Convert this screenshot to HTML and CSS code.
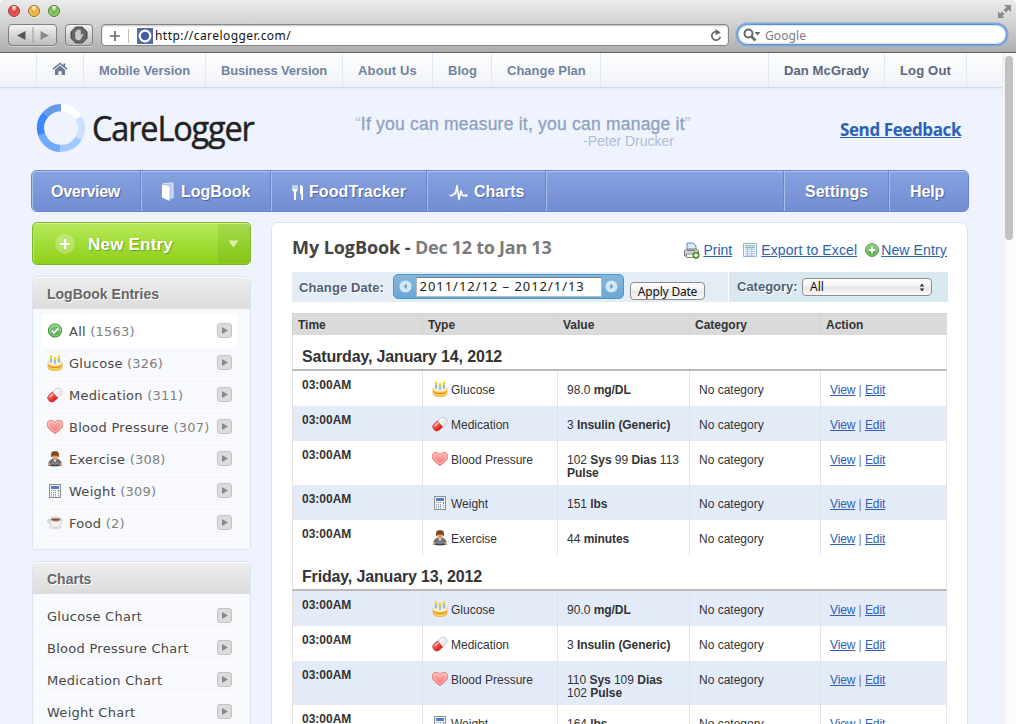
FILE: index.html
```html
<!DOCTYPE html>
<html lang="en">
<head>
<meta charset="utf-8">
<title>CareLogger</title>
<link rel="stylesheet" href="styles.css">
</head>
<body>
<svg class="sprite" aria-hidden="true">
  <defs>
    <linearGradient id="gRed" x1="0" y1="0" x2="0" y2="1"><stop offset="0" stop-color="#ff7a75"/><stop offset="1" stop-color="#dc1514"/></linearGradient>
    <linearGradient id="gHeart" x1="0" y1="0" x2="0" y2="1"><stop offset="0" stop-color="#ffb9b5"/><stop offset="1" stop-color="#f4706f"/></linearGradient>
    <linearGradient id="gGreen" x1="0" y1="0" x2="0" y2="1"><stop offset="0" stop-color="#8fd486"/><stop offset="1" stop-color="#3f9c34"/></linearGradient>
    <symbol id="check" viewBox="0 0 16 16"><circle cx="8" cy="7.500" r="6.600" fill="url(#gGreen)" stroke="#2f8a2c"/><circle cx="8" cy="7.500" r="5.500" fill="none" stroke="#b6e5ae" stroke-width=".8"/><path d="M4.800 7.700l2.300 2.200 4.200-4.500" fill="none" stroke="#fff" stroke-width="2"/></symbol>
    <symbol id="cake" viewBox="0 0 16 16">
      <path d="M1 7.500v5C1 14.500 4 15.600 8 15.600s7-1.100 7-3.100v-5z" fill="#fbd04a" stroke="#e3a52c" stroke-width=".6"/>
      <path d="M1.300 10.300c1.500 1.900 4 2.200 6.700 2.200s5.200-.3 6.700-2.200" fill="none" stroke="#e9703a" stroke-width="1"/>
      <ellipse cx="8" cy="7.700" rx="7" ry="3" fill="#fff6d2" stroke="#f0cf7d" stroke-width=".6"/>
      <path d="M4 3.500v4M8 5v3.800M12 3.500v4" stroke="#7da5dd" stroke-width="2.200"/>
      <path d="M4 3.500v4M8 5v3.800M12 3.500v4" stroke="#b4d1f4" stroke-width=".9"/>
      <ellipse cx="4" cy="2" rx="1.300" ry="1.800" fill="#f2d71c"/><ellipse cx="8" cy="3.600" rx="1.300" ry="1.800" fill="#f2d71c"/><ellipse cx="12" cy="2" rx="1.300" ry="1.800" fill="#f2d71c"/>
    </symbol>
    <symbol id="pill" viewBox="0 0 16 16"><g transform="rotate(-42 8 8)">
      <rect x="-.3" y="4" width="16.600" height="8" rx="4" fill="#ececec" stroke="#c0bdbd" stroke-width=".6"/>
      <path d="M8 4H3.700a4 4 0 0 0 0 8H8z" fill="url(#gRed)" stroke="#cf2a28" stroke-width=".6"/>
      <path d="M3.500 6h3.500" stroke="#ffc9c6" stroke-width="1.400" stroke-linecap="round"/><path d="M9.500 6.200h3.500" stroke="#fff" stroke-width="1.800" stroke-linecap="round"/></g>
    </symbol>
    <symbol id="heart" viewBox="0 0 16 16"><path d="M8 14.500C4.500 12 .1 9 .1 5.300.1 2.600 2.100 1.300 4.200 1.300c1.700 0 3.100.8 3.800 2.100.7-1.300 2.100-2.100 3.800-2.100 2.100 0 4.100 1.300 4.100 4C15.900 9 11.500 12 8 14.500z" fill="url(#gHeart)" stroke="#dc6461" stroke-width=".8"/><path d="M8 13C5.200 10.900 1.400 8.300 1.400 5.400c0-2 1.400-2.900 2.800-2.900 1.800 0 3.100 1.100 3.800 2.800.7-1.700 2-2.800 3.800-2.800 1.400 0 2.800.9 2.800 2.900C14.600 8.300 10.800 10.900 8 13z" fill="none" stroke="#ffd3cf" stroke-width=".8"/></symbol>
    <symbol id="person" viewBox="0 0 16 16">
      <path d="M1.500 14.500c0-3 1.200-5.700 4-6.200h5c2.800.5 4 3.200 4 6.200z" fill="#6b7076" stroke="#44474c" stroke-width=".7"/>
      <path d="M6.500 8.500L8 11.500l1.500-3z" fill="#f4f4f4"/><path d="M4.500 11.500l3 1.800M11.500 11.500l-3 1.800" stroke="#9fa3a9"/>
      <rect x=".9" y="12" width="2.300" height="2.600" rx="1" fill="#eba765"/><rect x="12.800" y="12" width="2.300" height="2.600" rx="1" fill="#eba765"/>
      <path d="M5.200 4h5.600v2.500C10.800 8.200 9.700 9 8 9S5.200 8.200 5.200 6.500z" fill="#e5a069"/>
      <path d="M4.400 6V3C4.400 1.200 5.600.6 8 .6s3.600.6 3.600 2.400v3l-.9-1.600L8 4.200l-2.700.2z" fill="#84491f" stroke="#5e300f" stroke-width=".5"/>
      <path d="M4 14.600h8" stroke="#3f4247" stroke-width="1.400"/>
    </symbol>
    <symbol id="calc" viewBox="0 0 16 16"><rect x="2.500" y="1.500" width="11" height="13" fill="#f6f6f6" stroke="#8c8f94"/><rect x="4" y="3" width="8" height="3" fill="#4f7dc5"/><path d="M4 7.500h6M4 9.500h6M4 11.500h6M4 13h6" stroke="#8594ad" stroke-width="1" stroke-dasharray="1 1"/><path d="M11 8.500h1M11 10.500h1M11 12.500h1" stroke="#8594ad"/><path d="M11 7.500h1.200" stroke="#e05338" stroke-width="1.200"/></symbol>
    <symbol id="cup" viewBox="0 0 16 16"><ellipse cx="8.500" cy="12" rx="6" ry="1.900" fill="#ededed" stroke="#c4c4c4" stroke-width=".6"/><path d="M3.200 4.500C.2 4-.3 8.300 3.800 9" fill="none" stroke="#b0b0b0" stroke-width="1"/><path d="M2.500 4.500c0 5 2 8 5.800 8s6.700-3 6.700-8z" fill="#f3f3f3" stroke="#bcbcbc" stroke-width=".6"/><ellipse cx="8.700" cy="4.400" rx="6.300" ry="2.300" fill="#fcfcfc" stroke="#b0b0b0" stroke-width=".6"/><ellipse cx="8.700" cy="4.600" rx="4.800" ry="1.400" fill="#8d5238"/></symbol>
    <symbol id="go" viewBox="0 0 15 15"><rect x=".5" y=".5" width="14" height="14" rx="2.500" fill="#dcdcdc" stroke="#c3c3c3"/><path d="M5 4l6 3.500L5 11z" fill="#8b8b8b"/></symbol>
  </defs>
</svg>

<div class="chrome">
  <div class="titlebar">
    <span class="light red"></span><span class="light amber"></span><span class="light lime"></span>
    <svg class="expand" width="15" height="15" viewBox="0 0 15 15"><path d="M7 1h7v7l-2.300-2.300-2.700 2.700-2.400-2.400 2.700-2.700zM1 7.500l2.100 2.100 2-2 2.300 2.300-2 2L7.500 14H1z" fill="#8a8a8a"/></svg>
  </div>
  <div class="toolbar">
    <div class="tool history">
      <svg width="48" height="20" viewBox="0 0 48 20"><path d="M16.500 6v9L8 10.500z" fill="#555"/><path d="M31.500 6v9l8.500-4.500z" fill="#8b8b8b"/><path d="M24 2v16" stroke="#9b9b9b"/></svg>
    </div>
    <div class="tool stop">
      <svg width="18" height="18" viewBox="0 0 18 18"><path d="M5.700 1h6.600L17 5.700v6.600L12.300 17H5.700L1 12.300V5.700z" fill="#666" stroke="#444"/><path d="M5.200 9.500V6.200c0-.9 1.300-.9 1.300 0V4.500c0-1 1.400-1 1.400 0v-.6c0-1 1.500-1 1.500 0v.6c0-1 1.400-1 1.400 0v4.700l1.300-1.300c.8-.6 1.700.1 1.200.9l-2.400 4.200c-.5.900-1.200 1.300-2.200 1.300-2.200 0-3.500-1.300-3.500-3.300z" fill="#c9c9c9"/></svg>
    </div>
    <div class="address">
      <svg width="12" height="12" viewBox="0 0 12 12"><path d="M6 1v10M1 6h10" stroke="#6b6b6b" stroke-width="1.700"/></svg>
      <span class="split"></span>
      <svg class="favicon" width="16" height="16" viewBox="0 0 16 16"><path d="M0 0h16v16H0z" fill="#5469ab"/><circle cx="8" cy="8" r="5.300" fill="#465ca2" stroke="#fff" stroke-width="2.200"/></svg>
      <span class="url">http://carelogger.com/</span>
      <svg class="reload" width="12" height="13" viewBox="0 0 12 13"><path d="M9.600 4.300A4.300 4.300 0 1 0 10.300 8" fill="none" stroke="#6b6b6b" stroke-width="1.700"/><path d="M5.500 0l5 3.200-5 3z" fill="#6b6b6b"/></svg>
    </div>
    <div class="search">
      <svg width="18" height="14" viewBox="0 0 18 14"><circle cx="5.500" cy="5.500" r="4" fill="none" stroke="#666" stroke-width="2"/><path d="M8.500 8.500l4 4" stroke="#666" stroke-width="2.500"/><path d="M11.500 4h6L14.500 7.500z" fill="#666"/></svg>
      <span>Google</span>
    </div>
  </div>
</div>

<div class="viewport">
  <div class="page">
    <div class="topnav">
      <span class="gutter"></span>
      <a class="home"><svg width="16" height="14" viewBox="0 0 16 14"><path d="M11.300 1.500h2v3h-2z" fill="#6d7b93"/><path d="M1 7.200L8 1.500l7 5.700" fill="none" stroke="#6d7b93" stroke-width="1.600"/><path d="M3 7.700l5-4.100 5 4.100V13H9.600V9.200H6.400V13H3z" fill="#6d7b93"/></svg></a>
      <a class="tn-mobile">Mobile Version</a>
      <a class="tn-business">Business Version</a>
      <a class="tn-about">About Us</a>
      <a class="tn-blog">Blog</a>
      <a class="tn-plan">Change Plan</a>
      <span class="fill"></span>
      <a class="user tn-user">Dan McGrady</a>
      <a class="user tn-out">Log Out</a>
      <span class="tail"></span>
    </div>

    <header class="masthead">
      <svg class="ring" width="50" height="50" viewBox="0 0 50 50">
        <g fill="none" stroke-width="7.200">
          <path d="M25 4.600A20.400 20.400 0 0 1 42.700 14.800" stroke="#fff"/>
          <path d="M42.700 14.800A20.400 20.400 0 0 1 42.700 35.200" stroke="#cbe1ff"/>
          <path d="M42.700 35.200A20.400 20.400 0 0 1 24 45.400" stroke="#a3caff"/>
          <path d="M24 45.400A20.400 20.400 0 0 1 5.600 31.500" stroke="#6faaff"/>
          <path d="M5.600 31.500A20.400 20.400 0 0 1 9.500 11.700" stroke="#3b89fd"/>
          <path d="M9.500 11.700A20.400 20.400 0 0 1 25 4.600" stroke="#639bea"/>
        </g>
      </svg>
      <span class="brand">CareLogger</span>
      <div class="quote">
        <p class="saying"><i>“</i>If you can measure it, you can manage it<i>”</i></p>
        <p class="author">-Peter Drucker</p>
      </div>
      <a class="feedback">Send Feedback</a>
    </header>

    <nav class="mainnav">
      <a class="mn-overview">Overview</a>
      <a class="mn-logbook"><svg width="14" height="20" viewBox="0 0 14 20"><path d="M3 1.500l9-1 1 1V16l-4 1.500z" fill="#b7c7ee"/><path d="M1 2.500l7.500 2V19L1 15.500z" fill="#fff"/><path d="M2 1.700L11 1v14.500" fill="none" stroke="#dbe4fb"/></svg>LogBook</a>
      <a class="mn-food"><svg width="12" height="17" viewBox="0 0 12 17"><path d="M1 1v4.500M3 1v4.500M5 1v4.500" stroke="#fff" stroke-width="1.100"/><path d="M.5 5h5v1.500L4 8v8H2V8L.5 6.500z" fill="#fff"/><path d="M8 1c2 0 3 1 3 3v12H9.200V10H8z" fill="#fff"/></svg>FoodTracker</a>
      <a class="mn-charts"><svg width="19" height="17" viewBox="0 0 19 17"><path d="M.5 11.500h3L5.500 9l1 .8L8 1.500l2 14 2-8.500 1.500 4.500H18" fill="none" stroke="#fff" stroke-width="1.600" stroke-linejoin="round"/><circle cx="17" cy="11.500" r="1.500" fill="#fff"/></svg>Charts</a>
      <span class="fill"></span>
      <a class="mn-settings">Settings</a>
      <a class="mn-help">Help</a>
    </nav>

    <div class="columns">
      <aside class="sidebar">
        <div class="newentry">
          <svg width="20" height="20" viewBox="0 0 20 20"><circle cx="10" cy="10" r="10" fill="#fff" opacity=".25"/><path d="M10 5v10M5 10h10" stroke="#fff" stroke-width="2.200"/></svg>
          <span class="label">New Entry</span>
          <span class="drop"><svg width="11" height="8" viewBox="0 0 11 8"><path d="M.5.5h10l-5 7z" fill="#d8f1b2"/></svg></span>
        </div>

        <section class="box">
          <h3>LogBook Entries</h3>
          <ul>
            <li class="on"><svg class="ic"><use href="#check"/></svg><span>All <em>(1563)</em></span><svg class="go"><use href="#go"/></svg></li>
            <li><svg class="ic"><use href="#cake"/></svg><span>Glucose <em>(326)</em></span><svg class="go"><use href="#go"/></svg></li>
            <li><svg class="ic"><use href="#pill"/></svg><span>Medication <em>(311)</em></span><svg class="go"><use href="#go"/></svg></li>
            <li><svg class="ic"><use href="#heart"/></svg><span>Blood Pressure <em>(307)</em></span><svg class="go"><use href="#go"/></svg></li>
            <li><svg class="ic"><use href="#person"/></svg><span>Exercise <em>(308)</em></span><svg class="go"><use href="#go"/></svg></li>
            <li><svg class="ic"><use href="#calc"/></svg><span>Weight <em>(309)</em></span><svg class="go"><use href="#go"/></svg></li>
            <li><svg class="ic"><use href="#cup"/></svg><span>Food <em>(2)</em></span><svg class="go"><use href="#go"/></svg></li>
          </ul>
        </section>

        <section class="box">
          <h3>Charts</h3>
          <ul>
            <li><span>Glucose Chart</span><svg class="go"><use href="#go"/></svg></li>
            <li><span>Blood Pressure Chart</span><svg class="go"><use href="#go"/></svg></li>
            <li><span>Medication Chart</span><svg class="go"><use href="#go"/></svg></li>
            <li><span>Weight Chart</span><svg class="go"><use href="#go"/></svg></li>
          </ul>
        </section>
      </aside>

      <main class="panel">
        <div class="heading">
          <h1>My LogBook - <em>Dec 12 to Jan 13</em></h1>
          <div class="actions">
            <svg width="17" height="17" viewBox="0 0 17 17"><path d="M4 8V1h6l3 3v4z" fill="#dcecff" stroke="#5c90cc"/><path d="M1.500 14V8.500l2-1.500h10l2 1.500V14z" fill="#d4d4d4" stroke="#7c7c7c"/><path d="M4 8.500h8" stroke="#777" stroke-width="1.200"/><path d="M3.500 12h9v3.500h-9z" fill="#f6f6f6" stroke="#888"/><circle cx="13" cy="13.300" r="3.200" fill="#66a83a" stroke="#3a7a1d" stroke-width=".8"/><path d="M13 11.300v4M11 13.300h4" stroke="#fff" stroke-width="1.200"/></svg>
            <a class="ac-print">Print</a>
            <svg width="14" height="14" viewBox="0 0 14 14"><path d="M.5.500h13v13H.500z" fill="#fafcff" stroke="#8fb3dd"/><path d="M2 2.500h10" stroke="#8cc56d"/><path d="M2 4.500h10" stroke="#7fa8d8" stroke-width="1.500"/><path d="M2 6.500h10M2 8.500h10M2 10.500h10M2 12.200h10M4.500 4v8.500M8.500 4v8.500" stroke="#a9c5e6" stroke-width=".9"/></svg>
            <a class="ac-export">Export to Excel</a>
            <svg width="14" height="14" viewBox="0 0 14 14"><circle cx="7" cy="7" r="6.400" fill="url(#gGreen)" stroke="#4a9a40"/><circle cx="7" cy="7" r="5.300" fill="none" stroke="#b3e0a9" stroke-width=".7"/><path d="M7 3.700v6.600M3.700 7h6.600" stroke="#fff" stroke-width="2"/></svg>
            <a class="ac-new">New Entry</a>
          </div>
        </div>

        <div class="filters">
          <div class="bydate">
            <label>Change Date:</label>
            <div class="range">
              <svg width="13" height="13" viewBox="0 0 13 13"><circle cx="6.500" cy="6.500" r="6" fill="#d3e7f5"/><path d="M7.800 3.700v5.600L4.600 6.500z" fill="#5da0d0"/></svg>
              <span class="field">2011/12/12 – 2012/1/13</span>
              <svg width="13" height="13" viewBox="0 0 13 13"><circle cx="6.500" cy="6.500" r="6" fill="#d3e7f5"/><path d="M5.200 3.700v5.600l3.200-2.800z" fill="#5da0d0"/></svg>
            </div>
            <span class="apply">Apply Date</span>
          </div>
          <div class="bycat">
            <label>Category:</label>
            <span class="select">All<svg width="6" height="9" viewBox="0 0 6 9"><path d="M3 .5L5.300 3.500H.7zM3 8.500L.7 5.500h4.600z" fill="#333"/></svg></span>
          </div>
        </div>

        <table class="log">
          <colgroup><col class="c1"><col class="c2"><col class="c3"><col class="c4"><col class="c5"></colgroup>
          <thead><tr><th>Time</th><th>Type</th><th>Value</th><th>Category</th><th>Action</th></tr></thead>
          <tbody>
            <tr class="day"><td colspan="5">Saturday, January 14, 2012</td></tr>
            <tr><td>03:00AM</td><td><svg class="ic"><use href="#cake"/></svg>Glucose</td><td>98.0 <b>mg/DL</b></td><td>No category</td><td><a>View</a> | <a>Edit</a></td></tr>
            <tr class="alt"><td>03:00AM</td><td><svg class="ic"><use href="#pill"/></svg>Medication</td><td>3 <b>Insulin (Generic)</b></td><td>No category</td><td><a>View</a> | <a>Edit</a></td></tr>
            <tr class="tall"><td>03:00AM</td><td><svg class="ic"><use href="#heart"/></svg>Blood Pressure</td><td>102 <b>Sys</b> 99 <b>Dias</b> 113 <b>Pulse</b></td><td>No category</td><td><a>View</a> | <a>Edit</a></td></tr>
            <tr class="alt"><td>03:00AM</td><td><svg class="ic"><use href="#calc"/></svg>Weight</td><td>151 <b>lbs</b></td><td>No category</td><td><a>View</a> | <a>Edit</a></td></tr>
            <tr><td>03:00AM</td><td><svg class="ic"><use href="#person"/></svg>Exercise</td><td>44 <b>minutes</b></td><td>No category</td><td><a>View</a> | <a>Edit</a></td></tr>
            <tr class="day"><td colspan="5">Friday, January 13, 2012</td></tr>
            <tr class="alt"><td>03:00AM</td><td><svg class="ic"><use href="#cake"/></svg>Glucose</td><td>90.0 <b>mg/DL</b></td><td>No category</td><td><a>View</a> | <a>Edit</a></td></tr>
            <tr><td>03:00AM</td><td><svg class="ic"><use href="#pill"/></svg>Medication</td><td>3 <b>Insulin (Generic)</b></td><td>No category</td><td><a>View</a> | <a>Edit</a></td></tr>
            <tr class="alt tall"><td>03:00AM</td><td><svg class="ic"><use href="#heart"/></svg>Blood Pressure</td><td>110 <b>Sys</b> 109 <b>Dias</b> 102 <b>Pulse</b></td><td>No category</td><td><a>View</a> | <a>Edit</a></td></tr>
            <tr><td>03:00AM</td><td><svg class="ic"><use href="#calc"/></svg>Weight</td><td>164 <b>lbs</b></td><td>No category</td><td><a>View</a> | <a>Edit</a></td></tr>
          </tbody>
        </table>
      </main>
    </div>
  </div>
  <div class="scrollbar"><span class="thumb"></span></div>
</div>
</body>
</html>
```
FILE: styles.css
```css
* { box-sizing: border-box; }
body {
  margin: 0; width: 1016px; height: 724px; overflow: hidden;
  display: flex; flex-direction: column;
  font-family: "Liberation Sans", Arial, sans-serif; color: #333;
}
h1, h3, p, ul { margin: 0; padding: 0; }
ul { list-style: none; }
em, i { font-style: normal; }
svg { display: block; flex: none; }
.sprite { position: absolute; width: 0; height: 0; }
.fill { flex: 1; }

/* browser window */
.chrome {
  height: 53px; flex: none; border-bottom: 1px solid #606060;
  background: linear-gradient(#ebebeb, #cfcfcf 50%, #adadad);
  border-radius: 4px 4px 0 0;
}
.titlebar { height: 24px; display: flex; padding: 5px 4px 0 8px; }
.light { width: 12px; height: 12px; margin-right: 8px; border-radius: 50%; border: 1px solid; box-shadow: 0 1px 0 rgba(255,255,255,.5); }
.red { background: radial-gradient(ellipse at 50% 0, #fff 8%, #e23e3c 45%, #f47c78); border-color: #8d3a38; }
.amber { background: radial-gradient(ellipse at 50% 0, #fff 8%, #eba82c 45%, #fbe08a); border-color: #956a26; }
.lime { background: radial-gradient(ellipse at 50% 0, #fff 8%, #6cb548 45%, #bdea9a); border-color: #4d7c36; }
.expand { margin: -1px 0 0 auto; }
.toolbar { height: 22px; display: flex; padding-left: 8px; }
.tool {
  height: 22px; border: 1px solid #808080; border-radius: 4px;
  background: linear-gradient(#f3f3f3, #bcbcbc); box-shadow: 0 1px 0 rgba(255,255,255,.4);
  display: flex; align-items: center; justify-content: center;
}
.history { width: 49px; }
.stop { width: 28px; margin-left: 8px; }
.address {
  width: 628px; height: 22px; margin-left: 8px; padding: 1px 6px 0 7px;
  display: flex; align-items: center; background: #fff;
  border: 1px solid #858585; border-radius: 4px; box-shadow: inset 0 1px 2px rgba(0,0,0,.25);
}
.split { width: 1px; height: 14px; margin-left: 7px; background: #bdbdbd; }
.favicon { margin-left: 8px; }
.url { margin-left: 2px; font: 12px/20px "Noto Sans", sans-serif; letter-spacing: .44px; color: #111; }
.reload { margin-left: auto; }
.search {
  width: 270px; height: 21px; margin-left: 8px; padding: 1px 0 0 5px;
  display: flex; align-items: center; gap: 4px; border-radius: 11px;
  background: #fff; border: 1px solid #5a8fcf; box-shadow: 0 0 0 1.500px #82abdc, inset 0 0 2px #7fa9dc;
  font: 12px/19px "Noto Sans", sans-serif; letter-spacing: .08px; color: #7b7b7b;
}
.viewport { flex: 1; min-height: 0; display: flex; }
.page { width: 1002px; background: #eff3fd; overflow: hidden; }
.scrollbar { width: 14px; background: linear-gradient(90deg, #ededed, #fafafa 30%, #fbfbfb); padding: 3px 0 0 3px; }
.thumb { display: block; width: 8px; height: 184px; border-radius: 4px; background: #c1c1c1; }

/* account bar */
.topnav {
  height: 35px; display: flex; border-bottom: 1px solid #ccdaee;
  background: linear-gradient(#fff, #f0f2f8);
  font-size: 13px; font-weight: bold; line-height: 36px; color: #7083a0;
}
.topnav a, .tail { border-left: 1px solid #e1e8f5; padding-left: 15px; }
.topnav .user { color: #58667d; }
.gutter { width: 36px; }
.topnav .home { width: 47px; padding: 9px 0 0 15px; }
.tn-mobile { width: 122px; letter-spacing: -.05px; }
.tn-business { width: 137px; letter-spacing: -.15px; }
.tn-about { width: 90px; letter-spacing: .15px; }
.tn-blog { width: 59px; }
.tn-plan { width: 110px; border-right: 1px solid #e1e8f5; }
.tn-user { width: 116px; letter-spacing: .11px; }
.tn-out { width: 82px; letter-spacing: .17px; }
.tail { width: 36px; }

/* logo and quote */
.masthead { height: 82px; display: flex; padding-left: 36px; box-shadow: inset 0 2px 0 #e7edf8; }
.ring { margin-top: 15px; }
.brand {
  width: 184px; margin-left: 6px; padding-top: 19px;
  font: 34.500px/42px "Open Sans", "Noto Sans", sans-serif; color: #222;
  letter-spacing: -1.200px; transform: scaleX(.94); transform-origin: 0 0;
  -webkit-text-stroke: .5px #222;
}
.quote { width: 337px; margin-left: 79px; padding-top: 26px; }
.saying { font-size: 17.500px; line-height: 20px; letter-spacing: .22px; color: #8ea1c0; white-space: nowrap; -webkit-text-stroke: .3px #8ea1c0; }
.saying i { color: #b4c1d8; letter-spacing: 0; -webkit-text-stroke: 0; }
.author { padding-right: 18px; text-align: right; font-size: 14px; line-height: 15px; color: #afbdd6; }
.feedback { margin-left: 148px; padding-top: 30px; font: bold 17px/24px "Open Sans", sans-serif; letter-spacing: -.4px; color: #2c61b5; text-decoration: underline; white-space: nowrap; }

/* primary navigation */
.mainnav {
  width: 938px; height: 42px; margin-left: 31px; display: flex;
  border: 1px solid #6786cc; border-radius: 6px;
  background: linear-gradient(#86a2e0, #748dd3);
  box-shadow: inset 0 1px 0 #adc3ee;
  font-size: 16px; font-weight: bold; color: #fff; text-shadow: 1px 1px 1px #4a62a2;
}
.mainnav a, .mainnav .fill { display: flex; align-items: center; padding-top: 2px; box-shadow: inset 1px 0 0 #a9bdea; border-right: 1px solid #6884ca; }
.mainnav a:first-child { border-radius: 5px 0 0 5px; }
.mainnav a:last-child { border-right: 0; }
.mainnav .mn-overview { width: 109px; padding-left: 19px; letter-spacing: -.27px; }
.mainnav .mn-logbook { width: 130px; padding-left: 20px; gap: 6px; }
.mainnav .mn-food { width: 156px; padding-left: 21px; gap: 5px; letter-spacing: .09px; }
.mainnav .mn-charts { width: 119px; padding-left: 22px; gap: 6px; letter-spacing: -.05px; }
.mainnav .mn-settings { width: 105px; padding-left: 21px; }
.mainnav .mn-help { width: 79px; padding-left: 21px; letter-spacing: -.1px; }

.columns { display: flex; padding: 10px 0 0 32px; }
.sidebar { width: 219px; }
.newentry {
  height: 43px; display: flex; align-items: center; padding-left: 22px;
  border: 1px solid #7db52b; border-radius: 5px;
  background: linear-gradient(#b8ea5e, #a0dc37 50%, #92d01a);
  box-shadow: inset 0 1px 0 #cdf28c, inset 1px 0 0 #b7e56b;
}
.newentry .label { margin-left: 13px; padding-top: 2px; font-size: 17px; font-weight: bold; letter-spacing: .21px; color: #fff; text-shadow: 1px 1px 1px #6f9e25; }
.drop { width: 32px; height: 39px; margin-left: auto; display: flex; align-items: center; justify-content: center; padding-right: 2px; background: rgba(90,150,20,.17); border-radius: 0 4px 4px 0; }

.box { height: 274px; margin-top: 11px; background: #f8f9fd; border: 1px solid #dae4f3; border-radius: 6px 6px 2px 2px; }
.box h3 {
  height: 32px; margin-bottom: 5px; padding-left: 14px; font-size: 14px; line-height: 33px; color: #666;
  background: linear-gradient(#ededed, #dcdcdc); border-top: 1px solid #fff; border-radius: 6px 6px 0 0; text-shadow: 1px 1px 0 #fff;
}
.box ul { width: 195px; margin-left: 9px; border-top: 1px solid #fff; }
.box li {
  height: 32px; display: flex; align-items: center; padding: 0 5px;
  border-bottom: 1px solid #fff; color: #484848;
  font-family: "DejaVu Sans", Verdana, sans-serif; font-size: 13px; letter-spacing: .27px;
}
.box li.on { background: #fff; }
.box li em { color: #808080; letter-spacing: .2px; }
.box li .ic { width: 16px; height: 16px; margin-right: 6px; }
.box li .go { width: 15px; height: 15px; margin-left: auto; }
.box li span { padding-top: 2px; white-space: nowrap; }

/* logbook */
.panel { width: 697px; height: 560px; margin-left: 20px; padding: 0 20px; background: #fff; border: 1px solid #d9e3f3; border-radius: 7px; }
.heading { height: 49px; display: flex; align-items: flex-start; }
.heading h1 { font: bold 18px/24px "Open Sans", sans-serif; letter-spacing: -.08px; color: #444; padding-top: 12px; white-space: nowrap; }
.heading h1 em { color: #7b7b7b; letter-spacing: -.27px; }
.actions { display: flex; align-items: center; margin-left: auto; padding-top: 18px; font-size: 14px; line-height: 18px; color: #2c61b5; }
.actions a { text-decoration: underline; white-space: nowrap; }
.ac-print { margin: 0 11px 0 3px; }
.ac-export { margin: 0 8px 0 4px; letter-spacing: .12px; }
.ac-new { margin-left: 2px; letter-spacing: .14px; }
.filters { width: 656px; height: 30px; display: flex; gap: 1px; font-size: 13px; font-weight: bold; color: #4f5f75; text-shadow: 1px 1px 0 #fff; }
.bydate { width: 436px; display: flex; background: #e4ecf6; padding-left: 7px; }
.bydate label { width: 94px; line-height: 31px; letter-spacing: .1px; }
.range { width: 231px; height: 25px; margin-top: 2px; padding: 0 5px; display: flex; align-items: center; justify-content: space-between; background: linear-gradient(#86b8dc, #6ba7d4); border: 1px solid #4796cf; border-radius: 5px; }
.field { width: 186px; height: 20px; padding-left: 3px; background: #fff; border: 1px solid #b9b9b9; border-top: 1px solid #777; font: 13px/17px "Noto Sans", sans-serif; letter-spacing: .96px; color: #222; white-space: nowrap; text-shadow: none; }
.apply { width: 75px; height: 18px; margin: 10px 0 0 6px; text-align: center; font: 12px/17px "Noto Sans", sans-serif; letter-spacing: -.2px; color: #111; background: linear-gradient(#fff, #f0f0f0 50%, #e6e6e6 51%, #fafafa); border: 1px solid #8d8d8d; border-radius: 4px; text-shadow: none; }
.bycat { flex: 1; display: flex; background: #dae8f1; padding-left: 8px; }
.bycat label { width: 65px; line-height: 30px; }
.select { width: 130px; height: 18px; margin-top: 6px; padding: 0 6px 0 7px; display: flex; align-items: center; justify-content: space-between; font: 12px/16px "Noto Sans", sans-serif; color: #111; background: linear-gradient(#fff, #f0f0f0 50%, #e6e6e6 51%, #fafafa); border: 1px solid #8d8d8d; border-radius: 4px; text-shadow: none; }

.log { width: 655px; margin-top: 11px; table-layout: fixed; border-collapse: separate; border-spacing: 0; font-size: 12px; line-height: 13px; }
.c1 { width: 130px; } .c2 { width: 135px; } .c3 { width: 132px; } .c4 { width: 131px; } .c5 { width: 127px; }
.log th { height: 22px; padding: 2px 0 0 5px; text-align: left; background: #dadada; border-left: 1px solid #d4d4d4; border-top: 1px solid #d2d2d2; }
.log td { height: 35px; padding: 13px 8px 0 9px; vertical-align: top; border-left: 1px solid #e3e3e3; }
.log td:last-child { border-right: 1px solid #e3e3e3; color: #777; }
.log td:first-child { padding-top: 8px; font-weight: bold; }
.log td:nth-child(3) b { letter-spacing: -.08px; }
.log .tall td { height: 44px; }
.log .alt td { background: #e4ebf8; }
.log .day td { height: 36px; padding: 12px 0 0 9px; font-size: 16px; line-height: 19px; letter-spacing: -.16px; border-bottom: 2px solid #bababa; color: #333; }
.log .ic { float: left; width: 16px; height: 16px; margin: -3px 3px 0 0; }
.log a { color: #2c61b5; text-decoration: underline; letter-spacing: -.15px; }
```
